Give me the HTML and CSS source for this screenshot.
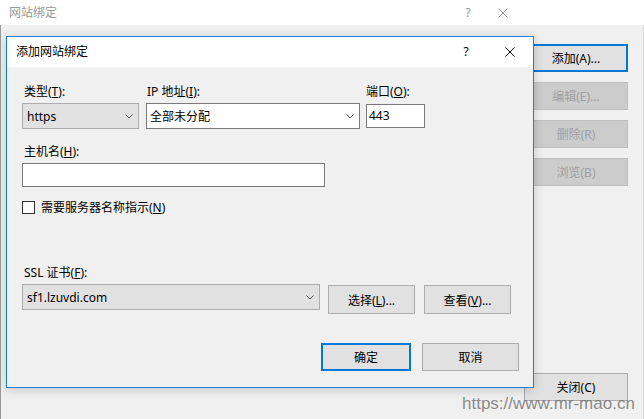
FILE: index.html
```html
<!DOCTYPE html>
<html lang="zh-CN">
<head>
    <meta charset="UTF-8">
    <title>网站绑定</title>
    <link rel="stylesheet" href="styles.css">
</head>
<body>
    <div class="window">
        <div class="titlebar titlebar--outer">
            <span class="titlebar__text">网站绑定</span>
            <span class="titlebar__help">?</span>
            <span class="titlebar__close">
                <svg width="10" height="10" viewBox="0 0 10 10"><path d="M0.5 0.5 L9.5 9.5 M9.5 0.5 L0.5 9.5" stroke="currentColor" stroke-width="1" fill="none"/></svg>
            </span>
        </div>
        <div class="window__body">
            <div class="side-buttons">
                <button class="button button--default">添加(A)...</button>
                <button class="button" disabled>编辑(E)...</button>
                <button class="button" disabled>删除(R)</button>
                <button class="button" disabled>浏览(B)</button>
                <button class="button button--close">关闭(C)</button>
            </div>
        </div>

        <div class="dialog" role="dialog" aria-label="添加网站绑定">
            <div class="titlebar titlebar--dialog">
                <span class="titlebar__text">添加网站绑定</span>
                <span class="titlebar__help">?</span>
                <span class="titlebar__close">
                    <svg width="10" height="10" viewBox="0 0 10 10"><path d="M0.5 0.5 L9.5 9.5 M9.5 0.5 L0.5 9.5" stroke="currentColor" stroke-width="1" fill="none"/></svg>
                </span>
            </div>
            <div class="dialog__body">
                <div class="row">
                    <div class="field field--type">
                        <label class="label">类型(<u>T</u>):</label>
                        <div class="combo combo--gray">
                            <span>https</span>
                            <svg class="chevron" width="8" height="5" viewBox="0 0 8 5"><path d="M0.5 0.5 L4 4 L7.5 0.5" stroke="#555" fill="none"/></svg>
                        </div>
                    </div>
                    <div class="field field--ip">
                        <label class="label label--tight">IP 地址(<u>I</u>):</label>
                        <div class="combo combo--edit">
                            <span>全部未分配</span>
                            <svg class="chevron" width="8" height="5" viewBox="0 0 8 5"><path d="M0.5 0.5 L4 4 L7.5 0.5" stroke="#555" fill="none"/></svg>
                        </div>
                    </div>
                    <div class="field field--port">
                        <label class="label label--flush">端口(<u>O</u>):</label>
                        <div class="textbox textbox--port">443</div>
                    </div>
                </div>

                <div class="field field--host">
                    <label class="label">主机名(<u>H</u>):</label>
                    <div class="textbox textbox--host"></div>
                </div>

                <div class="check">
                    <span class="check__box"></span>
                    <span class="check__label">需要服务器名称指示(<u>N</u>)</span>
                </div>

                <div class="field field--ssl">
                    <label class="label">SSL 证书(<u>F</u>):</label>
                    <div class="ssl-row">
                        <div class="combo combo--gray combo--ssl">
                            <span>sf1.lzuvdi.com</span>
                            <svg class="chevron" width="8" height="5" viewBox="0 0 8 5"><path d="M0.5 0.5 L4 4 L7.5 0.5" stroke="#555" fill="none"/></svg>
                        </div>
                        <button class="button button--select">选择(<u>L</u>)...</button>
                        <button class="button button--view">查看(<u>V</u>)...</button>
                    </div>
                </div>

                <div class="dialog__actions">
                    <button class="button button--default button--ok">确定</button>
                    <button class="button button--cancel">取消</button>
                </div>
            </div>
        </div>

        <div class="watermark">https://www.mr-mao.cn</div>
    </div>
</body>
</html>
```

FILE: styles.css
```css
/* Reset */
* {
    margin: 0;
    padding: 0;
    box-sizing: border-box;
}
body {
    width: 644px;
    height: 419px;
    overflow: hidden;
    background-color: #f0f0f0;
    font-family: "Noto Sans", "Noto Sans CJK SC", sans-serif;
    font-size: 12px;
    color: #000;
}
u {
    text-decoration: underline;
    text-underline-offset: 1px;
}

.window {
    position: relative;
    height: 419px;
}

/* Title bars */
.titlebar {
    display: flex;
    align-items: center;
    background-color: #fff;
}
.titlebar--outer {
    height: 25px;
    padding-left: 9px;
    padding-right: 118px;
    color: #999;
}
.titlebar--dialog {
    height: 30px;
    padding-left: 9px;
    color: #000;
}
.titlebar__text {
    flex: 1;
    line-height: 16px;
}
.titlebar__help {
    width: 24px;
    text-align: center;
    line-height: 16px;
}
.titlebar--dialog .titlebar__help {
    margin-right: 9px;
}
.titlebar__close {
    width: 46px;
    height: 100%;
    display: flex;
    align-items: center;
    justify-content: center;
}

/* Outer window */
.window__body {
    height: 394px;
    display: flex;
    justify-content: flex-end;
    padding: 19px 15px 18px 0;
    border-left: 1px solid #9a9a9a;
    border-right: 1px solid #dcdcdc;
}
.side-buttons {
    width: 104px;
    display: flex;
    flex-direction: column;
    gap: 10px;
}

/* Buttons */
.button {
    height: 28px;
    font-family: inherit;
    font-size: 12px;
    color: #000;
    background-color: #e1e1e1;
    border: 1px solid #adadad;
}
.button--default {
    border: 2px solid #0078d7;
}
.button:disabled {
    background-color: #cccccc;
    border-color: #bfbfbf;
    color: #a0a0a0;
}
.button--close {
    margin-top: auto;
}

/* Dialog */
.dialog {
    position: absolute;
    left: 6px;
    top: 36px;
    width: 528px;
    height: 352px;
    background-color: #f0f0f0;
    border: 1px solid #1a7fd4;
    box-shadow: 0 2px 10px rgba(0, 0, 0, 0.18);
}
.dialog__body {
    padding: 17px 14px 0 15px;
}

.row {
    display: flex;
    align-items: flex-start;
}
.field {
    display: flex;
    flex-direction: column;
}
.field--type {
    width: 117px;
    margin-right: 7px;
}
.field--ip {
    width: 214px;
    margin-right: 6px;
}
.field--port {
    width: 59px;
}
.field--host {
    margin-top: 15px;
    width: 303px;
}
.field--ssl {
    margin-top: 51px;
}

.label {
    height: 16px;
    line-height: 16px;
    margin-bottom: 3px;
    padding-left: 2px;
    white-space: nowrap;
}
.label--tight {
    padding-left: 1px;
}
.label--flush {
    padding-left: 0;
}

/* Combo boxes and text boxes */
.combo {
    height: 26px;
    display: flex;
    align-items: center;
    justify-content: space-between;
    padding-right: 5px;
}
.combo--gray {
    background-color: #e1e1e1;
    border: 1px solid #adadad;
    padding-left: 4px;
}
.combo--edit {
    background-color: #fff;
    border: 1px solid #7a7a7a;
    padding-left: 3px;
}
.combo--ssl {
    width: 298px;
    flex-shrink: 0;
}
.chevron {
    display: block;
}
.textbox {
    height: 24px;
    background-color: #fff;
    border: 1px solid #7a7a7a;
    padding-left: 2px;
    line-height: 22px;
}
.textbox--port {
    margin-top: 1px;
}

/* Checkbox */
.check {
    margin-top: 14px;
    display: flex;
    align-items: center;
    height: 13px;
}
.check__box {
    width: 13px;
    height: 13px;
    background-color: #fff;
    border: 1px solid #333;
    margin-right: 6px;
}
.check__label {
    line-height: 16px;
}

/* SSL row */
.ssl-row {
    display: flex;
    align-items: flex-start;
}
.button--select,
.button--view {
    width: 87px;
    height: 29px;
    margin-top: 1px;
}
.button--select {
    margin-left: 8px;
}
.button--view {
    margin-left: 9px;
}

.dialog__actions {
    margin-top: 29px;
    display: flex;
    justify-content: flex-end;
    gap: 11px;
}
.button--ok {
    width: 90px;
}
.button--cancel {
    width: 97px;
}

/* Watermark over the screenshot */
.watermark {
    position: absolute;
    left: 462px;
    top: 395px;
    font-family: "Liberation Sans", Arial, sans-serif;
    font-size: 17px;
    line-height: 17px;
    color: rgba(110, 110, 110, 0.8);
}
```
